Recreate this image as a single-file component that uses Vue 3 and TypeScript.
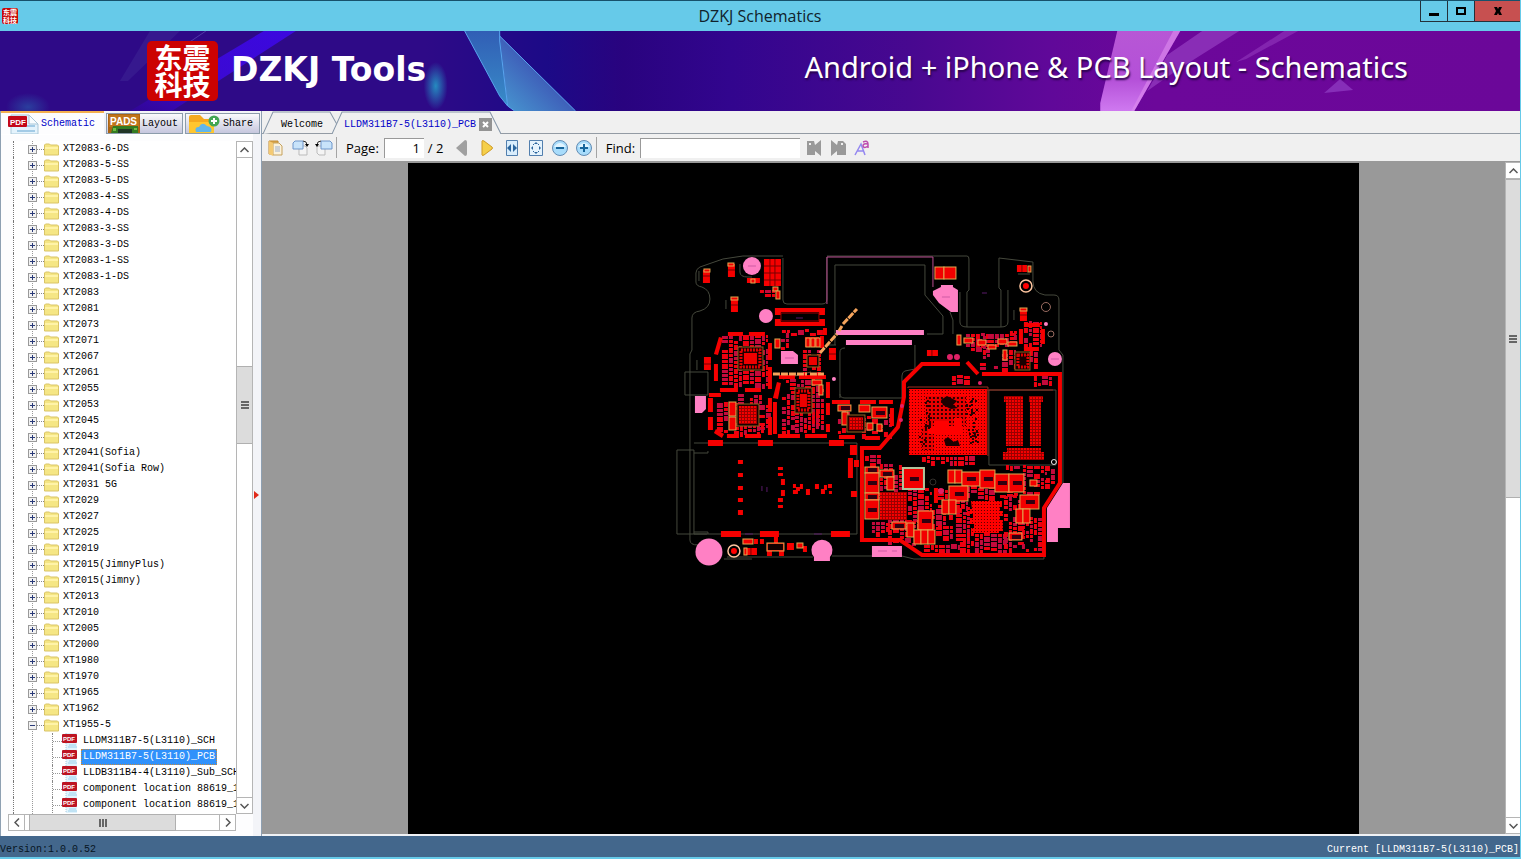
<script setup lang="ts">
import { ref } from 'vue'

interface Rect { x: number; y: number; w: number; h: number; c?: string }

const folders: string[] = [
  'XT2083-6-DS', 'XT2083-5-SS', 'XT2083-5-DS', 'XT2083-4-SS', 'XT2083-4-DS', 'XT2083-3-SS',
  'XT2083-3-DS', 'XT2083-1-SS', 'XT2083-1-DS', 'XT2083', 'XT2081', 'XT2073', 'XT2071', 'XT2067',
  'XT2061', 'XT2055', 'XT2053', 'XT2045', 'XT2043', 'XT2041(Sofia)', 'XT2041(Sofia Row)',
  'XT2031 5G', 'XT2029', 'XT2027', 'XT2025', 'XT2019', 'XT2015(JimnyPlus)', 'XT2015(Jimny)',
  'XT2013', 'XT2010', 'XT2005', 'XT2000', 'XT1980', 'XT1970', 'XT1965', 'XT1962', 'XT1955-5',
]
const files: string[] = [
  'LLDM311B7-5(L3110)_SCH', 'LLDM311B7-5(L3110)_PCB', 'LLDB311B4-4(L3110)_Sub_SCH',
  'component location 88619_1', 'component location 88619_1',
]
const selected = ref(1)
const page = ref('1')
const query = ref('')

/* Repeatable pseudo random source, so the board always looks the same. */
function source(seed: number): () => number {
  let s = seed
  return () => {
    s = (s * 16807) % 2147483647
    return s / 2147483647
  }
}

/* Fills an area with small component pads, in columns of varied width. */
function cluster(x: number, y: number, w: number, h: number, fill: number, seed: number): Rect[] {
  const rnd = source(seed * 7919 + 13)
  const out: Rect[] = []
  let cx = x
  while (cx < x + w - 1) {
    const bw = rnd() < 0.3 ? 7 : rnd() < 0.6 ? 5 : 4
    let cy = y - Math.floor(rnd() * 2)
    while (cy < y + h - 1) {
      const bh = rnd() < 0.4 ? 6 : 4
      if (rnd() < fill + 0.1) {
        out.push({ x: cx, y: cy, w: Math.min(bw - 1, x + w - cx), h: bh - 1, c: rnd() < 0.6 ? '#ee0010' : '#c40a3c' })
      }
      cy += bh
    }
    cx += bw
  }
  return out
}

const clusters: Rect[] = [
  [722, 336, 46, 50, 0.85], [717, 403, 22, 30, 0.8], [738, 395, 24, 10, 0.8], [759, 405, 12, 24, 0.6],
  [740, 426, 26, 8, 0.9], [781, 380, 40, 10, 0.7], [782, 391, 15, 42, 0.6], [812, 390, 12, 40, 0.7],
  [795, 413, 24, 20, 0.8], [803, 350, 20, 24, 0.75], [777, 334, 12, 16, 0.5], [760, 290, 18, 8, 0.8],
  [782, 330, 42, 5, 0.7], [838, 406, 12, 28, 0.6], [862, 410, 30, 26, 0.55],
  [966, 334, 26, 16, 0.75], [976, 336, 14, 22, 0.7], [988, 334, 28, 12, 0.8], [1002, 350, 14, 20, 0.8],
  [980, 360, 18, 10, 0.7], [1024, 322, 18, 24, 0.8], [1010, 332, 8, 14, 0.8], [1030, 352, 8, 18, 0.8],
  [952, 376, 20, 8, 0.7], [1034, 377, 20, 8, 0.7], [922, 457, 54, 7, 0.8],
  [865, 456, 18, 10, 0.7], [880, 465, 22, 26, 0.7], [908, 488, 24, 34, 0.75], [888, 521, 34, 24, 0.65],
  [872, 523, 18, 11, 0.9], [922, 510, 24, 28, 0.7], [924, 545, 36, 6, 0.9], [938, 490, 30, 28, 0.6],
  [956, 508, 14, 34, 0.85], [960, 534, 48, 18, 0.75], [964, 484, 54, 14, 0.65], [1004, 496, 20, 54, 0.7],
  [1023, 466, 24, 30, 0.75], [1022, 518, 20, 36, 0.55], [1046, 466, 11, 20, 0.8], [1006, 466, 16, 5, 0.7],
  [866, 494, 14, 7, 0.8], [938, 526, 16, 14, 0.8],
].flatMap(([x, y, w, h, f], i) => cluster(x, y, w, h, f, i + 1))

/* Solid pads and shield walls: x, y, width, height. */
const pads: Rect[] = [
  [703, 270, 7, 13], [728, 264, 7, 13], [731, 298, 7, 14], [747, 278, 13, 5], [764, 259, 17, 27],
  [704, 357, 7, 13], [728, 332, 15, 4], [749, 332, 16, 4], [768, 343, 4, 17], [714, 364, 4, 17],
  [768, 367, 4, 22], [720, 388, 18, 4], [745, 388, 16, 4], [709, 393, 12, 4], [708, 398, 5, 14],
  [708, 417, 5, 13], [768, 398, 4, 14], [768, 417, 4, 18], [773, 402, 4, 32], [727, 434, 12, 4],
  [745, 434, 16, 4], [778, 434, 22, 4], [805, 434, 22, 4], [779, 375, 16, 4], [799, 375, 27, 4],
  [826, 382, 4, 16], [826, 403, 4, 12], [826, 424, 4, 8], [832, 400, 18, 4], [860, 400, 16, 4],
  [879, 400, 14, 4], [890, 408, 4, 18], [839, 435, 16, 4], [865, 436, 15, 4], [775, 308, 50, 4],
  [775, 322, 50, 4], [775, 308, 6, 7], [819, 308, 6, 7], [775, 319, 6, 7], [819, 319, 6, 7],
  [829, 348, 7, 12], [820, 336, 4, 12], [823, 328, 4, 7], [805, 337, 14, 10],
  [936, 267, 20, 12], [1017, 265, 10, 7], [1020, 309, 7, 12], [1024, 323, 16, 4], [1024, 347, 15, 4],
  [1019, 329, 4, 15], [1041, 329, 4, 15], [927, 350, 11, 6], [957, 336, 4, 9], [964, 338, 9, 4],
  [708, 440, 15, 6], [758, 440, 15, 6], [829, 440, 15, 6], [850, 445, 7, 10], [848, 458, 5, 20],
  [854, 460, 5, 7], [851, 491, 6, 6], [721, 531, 20, 6], [760, 531, 19, 6], [831, 531, 19, 6],
  [738, 460, 5, 4], [738, 473, 5, 4], [738, 486, 5, 4], [738, 498, 5, 4], [738, 510, 5, 5],
  [778, 467, 5, 3], [778, 473, 5, 3], [781, 479, 4, 6], [781, 490, 4, 6], [778, 498, 5, 4],
  [778, 505, 5, 3], [793, 484, 3, 4], [796, 487, 4, 4], [793, 490, 5, 4], [800, 484, 3, 5],
  [806, 489, 4, 6], [815, 484, 4, 5], [821, 489, 4, 5], [824, 485, 3, 5], [828, 484, 4, 4],
  [829, 491, 3, 3], [743, 540, 9, 4], [754, 539, 4, 5], [760, 539, 4, 5], [744, 548, 13, 7],
  [767, 551, 5, 5], [779, 551, 5, 5], [774, 537, 4, 6], [787, 543, 7, 7], [798, 544, 4, 4],
  [803, 546, 4, 6], [934, 488, 4, 15],
].map(([x, y, w, h]) => ({ x, y, w, h }))

/* Parts drawn with a silk-screen frame. */
const framed: Rect[] = [
  [704, 269, 6, 3], [728, 263, 6, 3], [731, 297, 7, 3], [751, 279, 4, 4], [773, 287, 5, 4], [776, 291, 4, 8],
  [775, 339, 5, 9], [806, 338, 4, 9], [811, 338, 4, 9], [816, 338, 4, 9], [812, 380, 10, 5], [819, 385, 4, 10],
  [729, 402, 7, 14], [729, 417, 7, 13], [838, 405, 13, 6], [842, 412, 6, 13], [859, 405, 11, 7],
  [872, 407, 15, 11], [867, 423, 6, 7], [877, 424, 5, 7], [935, 267, 9, 12], [944, 267, 12, 12],
  [1028, 266, 3, 6], [1020, 308, 7, 3], [957, 335, 4, 10], [964, 338, 9, 5], [978, 340, 8, 5], [988, 345, 8, 4],
  [998, 339, 9, 5], [1008, 342, 9, 4], [1003, 350, 4, 10], [865, 467, 14, 6], [865, 473, 14, 20],
  [865, 493, 14, 7], [865, 500, 14, 19], [880, 470, 14, 7], [887, 477, 7, 13], [903, 468, 21, 21],
  [948, 470, 7, 13], [955, 470, 7, 13], [962, 472, 18, 14], [980, 470, 15, 18], [995, 474, 14, 18],
  [1009, 474, 15, 18], [949, 486, 19, 15], [942, 500, 7, 14], [949, 500, 7, 14], [1020, 495, 19, 14],
  [1016, 509, 7, 14], [1023, 509, 7, 14], [918, 511, 15, 19], [892, 522, 14, 7], [907, 523, 7, 14],
  [914, 530, 7, 14], [921, 530, 7, 14], [928, 530, 7, 14], [1009, 533, 13, 7], [1030, 480, 7, 6],
  [743, 539, 10, 5], [767, 543, 17, 8], [744, 548, 3, 7], [797, 543, 6, 5],
].map(([x, y, w, h]) => ({ x, y, w, h }))

/* Dark gaps between the two terminals of the larger parts. */
const cores: Rect[] = framed.filter((f) => f.w > 12 && f.h > 5 && f.y > 400).map((f) => ({
  x: f.x + Math.round(f.w / 2) - 4, y: f.y + Math.round(f.h / 2) - 2, w: 9, h: 4,
}))

/* Ball pattern openings inside the main processor. */
const openings: Rect[] = (() => {
  const rnd = source(4271)
  const out: Rect[] = []
  for (let i = 0; i < 60; i++) {
    const side = rnd() < 0.5 ? 919 : 966
    out.push({ x: side + Math.floor(rnd() * 12), y: 396 + Math.floor(rnd() * 50), w: 2, h: 2 })
  }
  return out
})()

const memory: Rect[] = [
  [1004, 396, 19, 6], [1006, 402, 17, 44], [1029, 396, 14, 6], [1030, 402, 11, 44],
  [1007, 448, 34, 4], [1003, 452, 41, 8],
].map(([x, y, w, h]) => ({ x, y, w, h }))
</script>

<template>
  <div class="window">
    <header class="titlebar">
      <span class="app-icon">东震<br>科技</span>
      <h1>DZKJ Schematics</h1>
      <div class="window-buttons">
        <button type="button" aria-label="Minimize"><svg width="12" height="12"><path d="M1 8h10v3H1z" /></svg></button>
        <button type="button" aria-label="Maximize"><svg width="12" height="12"><path fill-rule="evenodd" d="M1 2h10v8H1zM3 4v4h6V4z" /></svg></button>
        <button type="button" class="close" aria-label="Close"><svg width="12" height="12"><path d="M2 2h3l1 2 1-2h3L8 6l2 4H7L6 8l-1 2H2l2-4z" /></svg></button>
      </div>
    </header>

    <section class="banner">
      <svg class="banner-art" viewBox="0 0 1521 80" preserveAspectRatio="none" aria-hidden="true">
        <defs>
          <linearGradient id="bluebeam" x1="1" y1="0" x2="0" y2="1"><stop offset="0" stop-color="#3c08df" /><stop offset=".6" stop-color="#3b09d2" /><stop offset="1" stop-color="#310694" /></linearGradient>
          <linearGradient id="crystal" x1="0" y1="0" x2="0" y2="1"><stop offset="0" stop-color="#315eb5" /><stop offset="1" stop-color="#388cc8" /></linearGradient>
          <linearGradient id="facet" x1="0" y1="1" x2="1" y2="0"><stop offset="0" stop-color="#489bd2" /><stop offset="1" stop-color="#3525a1" /></linearGradient>
          <linearGradient id="pinkbeam" x1="0" y1="0" x2="0" y2="1"><stop offset="0" stop-color="#b757d5" /><stop offset=".6" stop-color="#b450d8" /><stop offset="1" stop-color="#cf79f0" /></linearGradient>
          <radialGradient id="glow"><stop offset="0" stop-color="#258bc0" /><stop offset="1" stop-color="#258bc0" stop-opacity="0" /></radialGradient>
        </defs>
        <path d="M264 0h32L172 80h-42z" fill="url(#bluebeam)" />
        <path d="M150 0h30L128 50h-8z" fill="#4a3aa0" opacity=".3" />
        <path d="M206 0L150 38" stroke="#6658bd" opacity=".6" />
        <ellipse cx="436" cy="55" rx="12" ry="24" fill="url(#glow)" />
        <ellipse cx="28" cy="76" rx="22" ry="14" fill="url(#glow)" opacity=".4" />
        <path d="M465 0h35l8 75-8-10z" fill="url(#crystal)" />
        <path d="M500 5l76 75h-61l-7-5z" fill="url(#facet)" />
        <path d="M465 0l35 65 8 10 7 5M500 0v10l8 65M500 5l76 75" fill="none" stroke="#58a4ee" />
        <path d="M1118 0h63l-46 80h-34v-8z" fill="url(#pinkbeam)" />
        <path d="M1174 0l-42 80h3l46-80z" fill="#de8cef" opacity=".6" />
        <path d="M1203 0h37l-62 39-30 21 20-36z" fill="#9a42c4" opacity=".65" />
        <path d="M1285 0h14l-52 28-10 3z" fill="#9a42c4" opacity=".5" />
        <path d="M1325 62l16-14 13 11z" fill="#8d38bf" opacity=".8" />
      </svg>
      <div class="logo"><span>东震</span><span>科技</span></div>
      <strong>DZKJ Tools</strong>
      <p>Android + iPhone &amp; PCB Layout - Schematics</p>
    </section>

    <div class="body">
      <aside class="sidebar">
        <nav class="side-tabs">
          <button type="button" class="active">
            <svg width="32" height="20" viewBox="0 0 32 20"><path d="M4 1h18l9 9v10H4z" fill="#e4f3fc" stroke="#a9c7d8" /><path d="M22 1v9h9z" fill="#f9fdff" stroke="#a9c7d8" /><path d="M10 17h18M20 12h8" stroke="#a3cbe6" stroke-width="2" /><rect x="1" y="2" width="19" height="11" rx="1" fill="#c40818" /><text x="3" y="11" class="badge">PDF</text></svg>
            Schematic
          </button>
          <button type="button">
            <svg width="32" height="19" viewBox="0 0 32 19"><rect width="32" height="19" fill="#aa6414" /><rect x="1" y="1" width="30" height="12" fill="#c0741b" /><path d="M5 12h25v7H3z" fill="#347b21" /><path d="M10 15h14v4H10z" fill="#203526" /><path d="M5 14h3v3H5zM26 14h3v2h-3z" fill="#70bd44" /><text x="2" y="11" class="pads">PADS</text></svg>
            Layout
          </button>
          <button type="button">
            <svg width="34" height="19" viewBox="0 0 34 19"><path d="M2 19V3q0-2 2-2h9l4 4h8q2 0 2 2v12z" fill="#f5a91f" /><path d="M2 8h25v11H2z" fill="#ffc62f" /><path d="M9 18q-2-5 3-5 3-6 8-1 6 1 4 6z" fill="#61b6ea" /><circle cx="27" cy="7" r="5.500" fill="#43a653" /><path d="M27 4v6M24 7h6" stroke="#fff" stroke-width="2" /></svg>
            Share
          </button>
        </nav>
        <div class="tree-area">
          <ul class="tree">
            <li v-for="(name, i) in folders" :key="name" class="folder">
              <button type="button" class="toggle" :aria-label="'Toggle ' + name">
                <svg width="9" height="9"><rect x=".5" y=".5" width="8" height="8" fill="#f2f2f2" stroke="#9a9a9a" /><path :d="i === folders.length - 1 ? 'M2 4.500h5' : 'M2 4.500h5M4.500 2v5'" stroke="#293a78" /></svg>
              </button>
              <span class="twig" />
              <svg class="folder-icon" width="15" height="13"><path d="M.5 12V2l1-1h4l1 1h7l1 1v9z" fill="#f5e684" stroke="#d9c467" /><path d="M1 4h13v2H1z" fill="#fff3a8" /></svg>
              <button type="button" class="name">{{ name }}</button>
            </li>
            <li v-for="(name, i) in files" :key="'f' + i" class="file">
              <span class="twig" />
              <svg width="16" height="16"><path d="M4 0h11v16H4z" fill="#e1f3fc" /><path d="M4 0v16" stroke="#a5c9df" stroke-dasharray="1 1" /><path d="M7 12h7M6 14h9" stroke="#9ed2ec" /><rect y="1" width="15" height="9" rx="1" fill="#bd1422" /><text x="1" y="8" class="mini">PDF</text></svg>
              <button type="button" class="name" :class="{ selected: selected === i }" @click="selected = i">{{ name }}</button>
            </li>
            <li class="folder"><span class="toggle" /><span class="twig" /><svg class="folder-icon" width="15" height="13"><path d="M1 12V1h6v1h7v10z" fill="#f3c070" /></svg></li>
          </ul>
          <div class="vbar">
            <button type="button" aria-label="Scroll up"><svg width="9" height="6"><path d="M.5 5l4-4 4 4" /></svg></button>
            <div class="track"><div class="thumb side"><i /></div></div>
            <button type="button" aria-label="Scroll down"><svg width="9" height="6"><path d="M.5 1l4 4 4-4" /></svg></button>
          </div>
          <div class="hbar">
            <button type="button" aria-label="Scroll left"><svg width="6" height="9"><path d="M5 .5l-4 4 4 4" /></svg></button>
            <div class="track"><div class="thumb"><i /></div></div>
            <button type="button" aria-label="Scroll right"><svg width="6" height="9"><path d="M1 .5l4 4-4 4" /></svg></button>
          </div>
        </div>
        <svg class="split-arrow" width="5" height="8"><path d="M0 0l5 4-5 4z" fill="#e02a1a" /></svg>
      </aside>

      <main class="main">
        <nav class="doc-tabs">
          <button type="button" class="welcome">
            <svg viewBox="0 0 74 22" preserveAspectRatio="none"><path d="M0 22L10 1h57l7 12" /></svg>
            <span>Welcome</span>
          </button>
          <div class="doc">
            <svg viewBox="0 0 169 22" preserveAspectRatio="none"><path d="M0 22L10 1h148l11 21" /></svg>
            <button type="button" class="doc-name">LLDM311B7-5(L3110)_PCB</button>
            <button type="button" class="doc-close" aria-label="Close tab"><svg width="13" height="13"><path d="M4 4l5 5M9 4l-5 5" stroke="#fff" stroke-width="2" /></svg></button>
          </div>
        </nav>
        <div class="toolbar">
          <button type="button" aria-label="Open"><svg width="18" height="18"><path d="M2 2h9v13H2z" fill="#dda94b" stroke="#c08a35" /><path d="M6 4h6l3 3v9H6z" fill="#fbf2dc" stroke="#c5a15c" /><path d="M2 2l4 2v13l-4-2z" fill="#f4ca73" /><path d="M8 8h5M8 10h5M8 12h5" stroke="#9db0cf" /></svg></button>
          <button type="button" aria-label="Rotate right"><svg width="18" height="18"><path d="M8 7h6l2 2v7H8z" fill="#f4f4f4" stroke="#bbb" /><path d="M4 2h8v8H2V4z" fill="#c8e3fa" stroke="#6e96ca" /><path d="M12 2q4 0 4 4" fill="none" stroke="#333" /><path d="M14 5h4l-2 3z" /></svg></button>
          <button type="button" aria-label="Rotate left"><svg width="18" height="18"><path d="M2 7h8v9H4l-2-2z" fill="#f4f4f4" stroke="#bbb" /><path d="M6 2h9l2 2v6H6z" fill="#c8e3fa" stroke="#6e96ca" /><path d="M6 2q-4 0-4 4" fill="none" stroke="#333" /><path d="M0 5h4L2 8z" /></svg></button>
          <i class="sep" />
          <label for="page">Page:</label>
          <input id="page" v-model="page" class="page-no" type="text">
          <span class="total">/ 2</span>
          <button type="button" class="prev" aria-label="Previous page"><svg width="18" height="18"><path d="M3 9l9-8q2 0 2 2v12q0 2-2 2z" fill="#a0a0a0" /></svg></button>
          <button type="button" class="next" aria-label="Next page"><svg width="18" height="18"><path d="M4 2q0-1 2 0l8 6q1 1 0 2l-8 6q-2 1-2 0z" fill="#f5cf4a" stroke="#cf9a26" /></svg></button>
          <button type="button" aria-label="Fit width"><svg width="18" height="18"><path d="M3.500 1.500h11v15h-11z" fill="#d9edfc" stroke="#527fae" /><path d="M8 5L4 9l4 4zM10 5l4 4-4 4z" fill="#2c669e" /></svg></button>
          <button type="button" aria-label="Fit page"><svg width="18" height="18"><path d="M2.500 1.500h13v15h-13z" fill="#e5f3fd" stroke="#527fae" /><path d="M9 3l2 2H7zM9 15l2-2H7zM4 9l2-2v4zM14 9l-2-2v4z" fill="#2c669e" /><path d="M6 6l1-1M11 5l1 1M6 12l1 1M12 12l-1 1" stroke="#2c669e" /></svg></button>
          <button type="button" aria-label="Zoom out"><svg width="18" height="18"><circle cx="9" cy="9" r="7.500" fill="#a8dcfb" stroke="#638cb4" /><path d="M3 8q6-8 12 0z" fill="#e0f4ff" /><path d="M5 9h8" stroke="#17669c" stroke-width="2" /></svg></button>
          <button type="button" aria-label="Zoom in"><svg width="18" height="18"><circle cx="9" cy="9" r="7.500" fill="#a8dcfb" stroke="#638cb4" /><path d="M3 8q6-8 12 0z" fill="#e0f4ff" /><path d="M5 9h8M9 5v8" stroke="#17669c" stroke-width="2" /></svg></button>
          <i class="sep" />
          <label for="find">Find:</label>
          <input id="find" v-model="query" class="find" type="text">
          <button type="button" aria-label="Find previous"><svg width="18" height="18"><path fill-rule="evenodd" d="M2 2h7l1 4 6-5v16l-6-5v4H2zM4 4v2h2V4z" fill="#999" /></svg></button>
          <button type="button" aria-label="Find next" class="find-next"><svg width="18" height="18"><path fill-rule="evenodd" d="M2 1l6 5 1-4h5l3 3v11H8v-4l-6 5zM12 4v2h2V4z" fill="#999" /></svg></button>
          <button type="button" aria-label="Match case"><svg width="18" height="18"><path d="M2 16L8 5l4 11M4 12h7" fill="none" stroke="#9487f0" stroke-width="1.500" /><path d="M10 3q5-2 5 2v4M15 5q-5-1-5 2 1 3 5 0" fill="none" stroke="#bd4baf" stroke-width="1.500" /></svg></button>
        </div>

        <div class="viewer">
          <div class="canvas">
            <div class="sheet">
              <svg class="board" viewBox="408 163 951 671" preserveAspectRatio="xMidYMin slice" role="img" aria-label="PCB layout">
                <defs>
                  <pattern id="balls" width="3" height="3" patternUnits="userSpaceOnUse"><rect width="3" height="3" fill="#f00" /><rect width="1" height="1" fill="#5c0000" /></pattern>
                  <pattern id="grid" width="3" height="3" patternUnits="userSpaceOnUse"><rect width="3" height="3" fill="#f80000" /><path d="M0 .5h3M.5 0v3" stroke="#980000" /></pattern>
                  <pattern id="holes" width="4" height="4" patternUnits="userSpaceOnUse"><rect width="4" height="4" fill="#e80000" /><rect x="1" y="1" width="2" height="2" fill="#300000" /></pattern>
                </defs>

                <g class="outline">
                  <path d="M743 256l-20 3-23 8q-4 2-4 6v9q0 4 6 5 8 3 8 12t-10 12q-8 1-8 7v32l-2 4v186q0 5 8 5h10M727 557h86M832 556h70l12 3h130v-6M783 258v42q0 4 4 4h35q5 0 5-5v-42" />
                  <path d="M743 256h40M827 256h140q2 0 2 3v31l-2 2v35h34v-37l-2-2v-30l34 4v19q0 12 12 14h9q5 0 5 5v50l4 5v128M960 292v30q0 5 7 5M1001 327q7 0 7-5v-32" />
                  <path d="M835 345v-80h90v30l18 21v18h-16M840 398v-46q0-4 5-4M915 345v24l-10 2q-3 1-3 5v22h-57q-5 0-5-4M826 345h10M950 312l3 8v14" />
                  <path d="M694 443h163v91H694v-84h-17v84h30M685 372h23v23h-23zM694 453h14v-2M694 532h14v2M989 390h67v75h-67z" />
                  <path d="M740 264v8q0 5 8 5h4M699 271v10M726 300v9M697 360v10M724 559h28M1014 310v10M1018 274h12" />
                </g>
                <path d="M827 304v-47h106v30" fill="none" stroke="#b94c91" />
                <path d="M783 379l28-7" stroke="#8d7857" stroke-width=".7" />

                <g>
                  <rect v-for="(r, i) in clusters" :key="'c' + i" :x="r.x" :y="r.y" :width="r.w" :height="r.h" :fill="r.c" />
                </g>
                <g fill="#f60000">
                  <rect v-for="(r, i) in pads" :key="'p' + i" :x="r.x" :y="r.y" :width="r.w" :height="r.h" />
                  <path d="M719 337l4 1-5 17-4-1zM777 382l4 1-3 16-5-1zM716 429l8 5-2 4-8-5z" />
                </g>
                <path d="M764 266h17M764 273h17M764 280h17M770 259v27M775 259v27M703 276h7M728 270h7M731 305h7M704 364h7M829 354h7M1022 265v7M1020 315h7M932 350v6M751 548v7" stroke="#760000" />
                <g fill="#f20000" stroke="#e0a850">
                  <rect v-for="(r, i) in framed" :key="'s' + i" :x="r.x" :y="r.y" :width="r.w" :height="r.h" />
                </g>
                <g fill="#300010">
                  <rect v-for="(r, i) in cores" :key="'k' + i" :x="r.x" :y="r.y" :width="r.w" :height="r.h" />
                </g>
                <rect x="903" y="468" width="21" height="21" fill="none" stroke="#b0c39c" stroke-width="2" />
                <rect x="768" y="544" width="15" height="6" fill="#100" />
                <rect x="781" y="313" width="38" height="8" fill="#000" stroke="#a00000" />

                <g stroke="#8f6421">
                  <rect x="738" y="347" width="25" height="23" fill="#180000" />
                  <rect x="737" y="404" width="22" height="22" fill="#180000" />
                  <rect x="795" y="388" width="17" height="25" fill="#180000" />
                  <rect x="807" y="355" width="12" height="12" fill="#180000" />
                  <rect x="847" y="415" width="18" height="17" fill="#180000" />
                  <rect x="1015" y="352" width="15" height="18" fill="#180000" />
                </g>
                <g fill="none" stroke="#e00000" stroke-width="3" stroke-dasharray="2 1">
                  <path d="M741 350h19v17h-19zM798 391h11v19h-11zM1018 355h10v12h-10z" />
                </g>
                <path d="M744 353h13v11h-13zM800 394h7v13h-7zM809 357h8v8h-8z" fill="#ef0000" />
                <path d="M739 406h18v18h-18zM849 417h14v13h-14zM880 492h27v28h-27z" fill="url(#grid)" />

                <path d="M909 389h78v66h-78z" fill="url(#balls)" />
                <path d="M926 396h40v30h-40zM922 428h12v22h-12z" fill="url(#holes)" />
                <path d="M941 400l6-4 10 5-4 4 5 3-7 1-8-4zM944 440l4-3 6 5 4-2 2 6h-14z" fill="#1c0000" />
                <path d="M928 426h6v-5h15v5h5v-8h8v16h-34z" fill="#f00" />
                <rect v-for="(r, i) in openings" :key="'o' + i" :x="r.x" :y="r.y" :width="r.w" :height="r.h" fill="#290000" />
                <path d="M908 388v-1h80v69M987 390h66" fill="none" stroke="#9a2e20" />
                <g fill="url(#grid)"><rect v-for="(r, i) in memory" :key="'m' + i" :x="r.x" :y="r.y" :width="r.w" :height="r.h" /></g>
                <path d="M971 501h31v6h-2v4h3v5h-3v4h3v11h-4v2h-28v-5h3v-4h-4v-6h3v-4h-3v-5h2z" fill="url(#balls)" />

                <path d="M960 364h-38l-18 18v15l-6 30-18 21h-18v92h38l22 15h122v-47l16-25V374h-78M967 362l11 12" class="shield" />

                <g fill="#ff80c4">
                  <circle cx="752" cy="266" r="9" /><circle cx="766" cy="316" r="7" /><circle cx="1055" cy="359" r="7" />
                  <circle cx="709" cy="552" r="13.500" /><path d="M814 561v-4a10.500 10.500 0 1 1 16 0v4z" />
                  <path d="M781 351h12l5 4v9h-17zM695 396h11v13l-4 4h-7zM933 291l8-4v-2h12v2l5 3v22h-7l-12-9-6-8z" />
                  <path d="M836 330h88v5h-88zM846 340h66v5h-66zM1063 483h7v45h-12v14h-11v-34zM872 546h30v11h-30z" />
                  <circle cx="1046" cy="324" r="2" /><circle cx="834" cy="379" r="2" />
                </g>
                <g fill="#df2166"><circle cx="950" cy="357" r="3" /><circle cx="957" cy="357" r="3" /><circle cx="902" cy="406" r="2" /><circle cx="901" cy="420" r="2" /><circle cx="941" cy="491" r="3" /><circle cx="980" cy="383" r="2" /></g>
                <g stroke="#ba4b98" stroke-width=".7"><path d="M748 266h8M785 358h9M942 297h8M1051 359h8M878 551h9M892 551h5" /></g>
                <g stroke="#5a1a6a"><path d="M796 318h7M982 293h5M762 486v5M767 487v5M745 534h8M814 534h8" /></g>
                <path d="M820 353l17-19M839 331l3-5M843 324l14-15" class="jumper" />
                <path d="M773 374h34M810 374h14" class="jumper" />
                <g fill="none">
                  <g stroke="#ffc6a0" stroke-width="1.500"><circle cx="1026" cy="286" r="6" /><circle cx="734" cy="551" r="6" /></g>
                  <g stroke="#9b6c61"><circle cx="1046" cy="307" r="4.500" /><circle cx="1051" cy="334" r="3" /></g>
                  <circle cx="1054" cy="462" r="2.500" stroke="#eee" /><circle cx="933" cy="482" r="3" stroke="#33302c" />
                </g>
                <circle cx="1026" cy="286" r="3" fill="#f00" /><circle cx="734" cy="551" r="3" fill="#f00" />
              </svg>
            </div>
          </div>
          <div class="vbar">
            <button type="button" aria-label="Scroll up"><svg width="9" height="6"><path d="M.5 5l4-4 4 4" /></svg></button>
            <div class="track"><div class="thumb"><i /></div></div>
            <button type="button" aria-label="Scroll down"><svg width="9" height="6"><path d="M.5 1l4 4 4-4" /></svg></button>
          </div>
        </div>
      </main>
    </div>

    <footer class="status"><span>Version:1.0.0.52</span><span class="current">Current [LLDM311B7-5(L3110)_PCB]</span></footer>
  </div>
</template>

<style>
body { margin: 0; overflow: hidden; }
</style>

<style scoped>
* { box-sizing: border-box; }
button { margin: 0; padding: 0; border: 0; background: none; color: inherit; font: inherit; }
svg { display: block; flex: none; }
.window { display: flex; flex-direction: column; height: 100vh; overflow: hidden; border-right: 1px solid #66cae9; border-bottom: 2px solid #66cae9; background: #f0f0f0; color: #000; font: 10px/16px "Liberation Mono", monospace; }

.titlebar { position: relative; display: flex; flex: none; align-items: center; height: 31px; padding: 0 18px 0 2px; border-top: 1px solid #17516b; background: #66cae9; }
.app-icon { width: 16px; height: 16px; border-radius: 2px; background: #c80808; color: #fff; font: bold 7px/8px "Noto Sans CJK SC", sans-serif; text-align: center; }
h1 { flex: 1; margin: 0; color: #10222c; font: 16px/28px "Open Sans", sans-serif; text-align: center; }
.window-buttons { position: absolute; top: 0; right: 0; display: flex; height: 21px; border: solid #24303a; border-width: 0 0 1px 1px; }
.window-buttons button { display: grid; place-items: center; width: 27px; border-right: 1px solid #24303a; }
.window-buttons .close { width: 45px; border-right: 0; background: #c75050; }

.banner { position: relative; display: flex; flex: none; align-items: center; height: 80px; padding: 0 112px 0 147px; background: linear-gradient(90deg, #2e0a87 0, #2e0a87 28%, #1c0a87 36%, #29037f 41%, #32058e 48%, #480890 60%, #600899 69%, #6c079a 76%, #6b0799 100%); color: #fff; }
.banner-art { position: absolute; inset: 0; width: 100%; height: 100%; }
.logo { position: relative; display: flex; flex-direction: column; align-items: center; justify-content: center; width: 71px; height: 60px; border-radius: 5px; background: #cc0202; font: bold 28px/27px "Noto Sans CJK SC", sans-serif; }
.logo span { display: block; height: 27px; overflow: hidden; }
.banner strong { position: relative; margin-left: 13px; font: bold 33px/76px "DejaVu Sans", sans-serif; padding-bottom: 2px; }
.banner p { position: relative; margin: 0 0 0 auto; padding-bottom: 9px; font: 29px/40px "Noto Sans", sans-serif; text-shadow: 1px 2px 2px #28044c; white-space: nowrap; }

.body { display: flex; flex: 1; min-height: 0; }
.sidebar { position: relative; display: flex; flex: none; flex-direction: column; width: 261px; border-left: 1px solid #8ea0b2; background: #f3f4f8; }
.side-tabs { display: flex; flex: none; align-items: flex-end; gap: 2px; height: 23px; }
.side-tabs button { display: flex; align-items: center; gap: 2px; width: 77px; height: 21px; padding-left: 1px; border: 1px solid #8c9cab; background: linear-gradient(#fafafc, #c6c7de); }
.side-tabs button:last-child { width: 75px; }
.side-tabs .active { width: 103px; height: 23px; padding-left: 6px; border: 0; border-top: 2px solid #f4b04f; background: #fdfdfe; color: #0000c8; }
.badge { fill: #fff; font: bold 8px "Liberation Sans", sans-serif; }
.pads { fill: #fff; font: bold 10px "Liberation Sans", sans-serif; }
.mini { fill: #fff; font: bold 6px "Liberation Sans", sans-serif; }
.tree-area { display: grid; flex: 1; grid-template: minmax(0, 1fr) 17px / minmax(0, 1fr) 17px; min-height: 0; margin-right: 8px; padding: 6px 0 5px 7px; border-top: 1px solid #fff; background: #fdfdfe; }
.tree { margin: 0; padding: 0 0 0 5px; overflow: hidden; list-style: none; background: linear-gradient(90deg, transparent 5px, #fff 5px); }
.tree li { display: flex; align-items: center; height: 16px; border-left: 1px dotted #777; white-space: nowrap; }
.folder .toggle { width: 9px; height: 9px; margin-left: 14px; }
.folder { background: repeating-linear-gradient(#999 0 1px, transparent 1px 2px) 18px 0 / 1px 100% no-repeat; }
.twig { flex: none; width: 7px; border-top: 1px dotted #888; }
.folder .name { margin-left: 4px; }
.file { padding-left: 19px; background: repeating-linear-gradient(#999 0 1px, transparent 1px 2px) 18px 0 / 1px 100% no-repeat; }
.file .twig { align-self: stretch; width: 10px; margin-left: 19px; border-top: 0; border-left: 1px dotted #888; background: repeating-linear-gradient(90deg, #999 0 1px, transparent 1px 2px) 0 8px / 100% 1px no-repeat; }
.name { height: 16px; line-height: 16px; }
.file .name { margin-left: 3px; padding: 0 2px; }
.file .selected { outline: 1px dotted #c78a3c; outline-offset: -1px; background: #3091fb; color: #fff; }
.split-arrow { position: absolute; top: 380px; right: 2px; }

.vbar { display: flex; flex-direction: column; border: solid #b5b5b5; border-width: 0 1px; background: #fff; }
.vbar button { display: grid; flex: none; place-items: center; height: 17px; border: solid #b5b5b5; border-width: 1px 0; background: #fff; }
.vbar button svg, .hbar button svg { fill: none; stroke: #555; stroke-width: 1.500; }
.track { position: relative; flex: 1; }
.thumb { position: absolute; display: grid; place-items: center; border: 1px solid #b0b0b0; background: #dcdcdc; }
.vbar .thumb { top: 0; right: 0; left: 0; height: 50%; border-width: 1px 0; }
.vbar .side { top: 32.500%; height: 12.200%; }
.thumb i { width: 8px; height: 8px; background: repeating-linear-gradient(#666 0 2px, transparent 2px 3px); }
.hbar { display: flex; border: 1px solid #b5b5b5; background: #fff; }
.hbar button { display: grid; place-items: center; width: 16px; border-right: 1px solid #b5b5b5; }
.hbar button:last-child { border: 0; border-left: 1px solid #b5b5b5; }
.hbar .thumb { top: -1px; bottom: -1px; left: 2%; width: 76%; }
.hbar .thumb i { background: repeating-linear-gradient(90deg, #666 0 2px, transparent 2px 3px); }

.main { display: flex; flex: 1; flex-direction: column; min-width: 0; border-left: 1px solid #8ea0b2; }
.doc-tabs { display: flex; flex: none; height: 23px; padding-left: 1px; border-bottom: 1px solid #939ba4; }
.doc-tabs svg { fill: #f0f0f0; stroke: #8797a8; }
.doc-tabs > * { position: relative; display: flex; align-items: center; height: 23px; padding-top: 4px; }
.doc-tabs > * > svg:first-child { position: absolute; inset: 0; width: 100%; height: 100%; }
.doc-tabs span, .doc-tabs .doc button { position: relative; }
.welcome { width: 74px; padding-left: 18px; }
.doc { width: 169px; margin-left: -5px; padding-left: 12px; gap: 3px; color: #0000c8; }
.doc-close { width: 13px; height: 13px; background: #939393; }

.toolbar { display: flex; flex: none; align-items: center; height: 27px; padding-left: 5px; font: 13px/20px "Open Sans", sans-serif; }
.toolbar button { width: 18px; height: 18px; margin-right: 6px; }
.sep { width: 1px; height: 21px; margin: 0 9px 0 -3px; background: #a4a4a4; }
.sep + label { flex: none; white-space: nowrap; }
.toolbar input { height: 20px; border: solid #999; border-width: 1px 0 0 1px; background: #fff; font: inherit; outline: 0; }
.page-no { width: 40px; margin-left: 5px; padding: 0 4px; text-align: right; }
.find { width: 160px; margin: 0 5px; }
.total { width: 25px; margin-left: 4px; white-space: nowrap; }
.toolbar .prev, .toolbar .next { margin-right: 7px; }

.viewer { display: flex; flex: 1; min-height: 0; border-top: 1px solid #999; border-bottom: 2px solid #f0f2f5; background: #f0f0f0; }
.canvas { flex: 1; min-width: 0; padding-top: 1px; background: #999; }
.sheet { width: 76.500%; height: 100%; margin: 0 auto; overflow: hidden; background: #000; }
.board { width: 100%; height: 100%; }
.viewer .vbar { width: 15px; border-right: 0; }
.outline { fill: none; stroke: #45483c; stroke-width: 1; }
.shield { fill: none; stroke: #f50000; stroke-width: 4; }
.jumper { fill: none; stroke: #f5a45c; stroke-width: 3; stroke-dasharray: 7 1; }

.status { display: flex; flex: none; align-items: center; justify-content: space-between; height: 21px; padding-top: 6px; background: #43678c; color: #071522; }
.current { padding-right: 1px; color: #fff; }
</style>
